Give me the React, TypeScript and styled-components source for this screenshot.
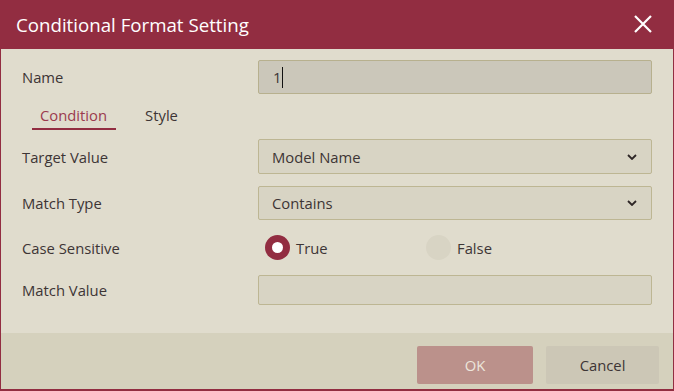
import React, { FC, useState } from "react";
import styled, { createGlobalStyle } from "styled-components";

const GlobalStyle = createGlobalStyle`
  html, body {
    margin: 0;
    padding: 0;
    background: #ffffff;
  }
  * {
    box-sizing: border-box;
  }
`;

const StyledDialog = styled.div`
  width: 674px;
  height: 391px;
  display: flex;
  flex-direction: column;
  font-family: "Open Sans", "Noto Sans", sans-serif;
  border: 1px solid #922d41;
  border-top: none;
  border-bottom-width: 2px;
  background: #e0dccd;
`;

const StyledHeader = styled.div`
  height: 49px;
  flex: none;
  margin: 0 -1px;
  background: #922d41;
  display: flex;
  align-items: center;
  justify-content: space-between;
  padding: 0 21px 1px 16px;
`;

const StyledTitle = styled.h1`
  margin: 0;
  font-size: 18.7px;
  font-weight: 400;
  color: #ffffff;
`;

const StyledClose = styled.button`
  border: none;
  background: none;
  padding: 0;
  width: 20px;
  height: 20px;
  display: flex;
  align-items: center;
  justify-content: center;
  cursor: pointer;
`;

const StyledBody = styled.div`
  flex: 1;
  padding: 11px 21px 0 21px;
`;

const StyledRow = styled.div<{ $height: number; $gap: number }>`
  display: grid;
  grid-template-columns: 236px 1fr;
  align-items: center;
  height: ${({ $height }) => $height}px;
  margin-bottom: ${({ $gap }) => $gap}px;
`;

const StyledLabel = styled.label`
  font-size: 14.8px;
  color: #3d3535;
`;

const StyledField = styled.div`
  height: 100%;
  display: flex;
  align-items: center;
  padding: 0 14px;
  font-size: 14.8px;
  color: #3d3535;
  background: #cbc7ba;
  border: 1px solid #b7b08e;
  border-radius: 2px;
`;

const StyledCaret = styled.span`
  display: inline-block;
  width: 1px;
  height: 21px;
  margin-left: 1px;
  background: #111111;
`;

const StyledSelect = styled.div`
  height: 100%;
  display: flex;
  align-items: center;
  justify-content: space-between;
  padding: 0 14px 0 13px;
  font-size: 14.8px;
  color: #3d3535;
  background: #d8d4c4;
  border: 1px solid #bdb693;
  border-radius: 2px;
`;

const StyledTextBox = styled.div`
  height: 100%;
  background: #d8d4c4;
  border: 1px solid #bdb693;
  border-radius: 2px;
`;

const StyledTabs = styled.div`
  display: flex;
  align-items: flex-end;
  gap: 21px;
  height: 36px;
  padding-left: 10px;
  margin-bottom: 9px;
`;

const StyledTab = styled.div<{ $active?: boolean }>`
  font-size: 14.8px;
  line-height: 20px;
  padding: 0 9px 3px 8px;
  color: ${({ $active }) => ($active ? "#9b3a4d" : "#3d3535")};
  border-bottom: 2px solid ${({ $active }) => ($active ? "#922d41" : "transparent")};
  cursor: pointer;
`;

const StyledRadioGroup = styled.div`
  display: flex;
  align-items: center;
  padding-left: 7px;
`;

const StyledRadioOption = styled.div`
  width: 161px;
  display: flex;
  align-items: center;
  gap: 6px;
  font-size: 14.8px;
  color: #3d3535;
  cursor: pointer;
`;

const StyledRadioDot = styled.span<{ $checked?: boolean }>`
  width: 25px;
  height: 25px;
  border-radius: 50%;
  display: flex;
  align-items: center;
  justify-content: center;
  background: ${({ $checked }) => ($checked ? "#922d41" : "#d8d4c4")};

  &::after {
    content: "";
    width: 11px;
    height: 11px;
    border-radius: 50%;
    background: #ffffff;
    display: ${({ $checked }) => ($checked ? "block" : "none")};
  }
`;

const StyledFooter = styled.div`
  height: 56px;
  flex: none;
  background: #d5d1bd;
  display: flex;
  align-items: flex-start;
  justify-content: flex-end;
  gap: 13px;
  padding: 13px 14px 0 0;
`;

const StyledButton = styled.button<{ $primary?: boolean }>`
  height: 38px;
  width: ${({ $primary }) => ($primary ? 116 : 113)}px;
  border: none;
  border-radius: 2px;
  font-family: inherit;
  font-size: 14.8px;
  background: ${({ $primary }) => ($primary ? "#bb918b" : "#ccc7b6")};
  color: ${({ $primary }) => ($primary ? "#ede6dc" : "#3d3535")};
  cursor: pointer;
`;

const Chevron: FC = () => (
  <svg width="10" height="6" viewBox="0 0 10 6">
    <path d="M1 1 L5 5 L9 1" fill="none" stroke="#2e2626" strokeWidth="1.8" />
  </svg>
);

const App: FC = () => {
  const [tab, setTab] = useState("condition");
  const [caseSensitive, setCaseSensitive] = useState(true);

  return (
    <>
      <GlobalStyle />
      <StyledDialog>
        <StyledHeader>
          <StyledTitle>Conditional Format Setting</StyledTitle>
          <StyledClose aria-label="close">
            <svg width="18" height="18" viewBox="0 0 18 18">
              <path d="M1 1 L17 17 M17 1 L1 17" stroke="#ffffff" strokeWidth="2.2" />
            </svg>
          </StyledClose>
        </StyledHeader>
        <StyledBody>
          <StyledRow $height={34} $gap={0}>
            <StyledLabel>Name</StyledLabel>
            <StyledField>
              1<StyledCaret />
            </StyledField>
          </StyledRow>
          <StyledTabs>
            <StyledTab $active={tab === "condition"} onClick={() => setTab("condition")}>
              Condition
            </StyledTab>
            <StyledTab $active={tab === "style"} onClick={() => setTab("style")}>
              Style
            </StyledTab>
          </StyledTabs>
          <StyledRow $height={35} $gap={12}>
            <StyledLabel>Target Value</StyledLabel>
            <StyledSelect>
              Model Name
              <Chevron />
            </StyledSelect>
          </StyledRow>
          <StyledRow $height={34} $gap={14}>
            <StyledLabel>Match Type</StyledLabel>
            <StyledSelect>
              Contains
              <Chevron />
            </StyledSelect>
          </StyledRow>
          <StyledRow $height={27} $gap={14}>
            <StyledLabel>Case Sensitive</StyledLabel>
            <StyledRadioGroup>
              <StyledRadioOption onClick={() => setCaseSensitive(true)}>
                <StyledRadioDot $checked={caseSensitive} />
                True
              </StyledRadioOption>
              <StyledRadioOption onClick={() => setCaseSensitive(false)}>
                <StyledRadioDot $checked={!caseSensitive} />
                False
              </StyledRadioOption>
            </StyledRadioGroup>
          </StyledRow>
          <StyledRow $height={30} $gap={0}>
            <StyledLabel>Match Value</StyledLabel>
            <StyledTextBox />
          </StyledRow>
        </StyledBody>
        <StyledFooter>
          <StyledButton $primary>OK</StyledButton>
          <StyledButton>Cancel</StyledButton>
        </StyledFooter>
      </StyledDialog>
    </>
  );
};

export default App;
